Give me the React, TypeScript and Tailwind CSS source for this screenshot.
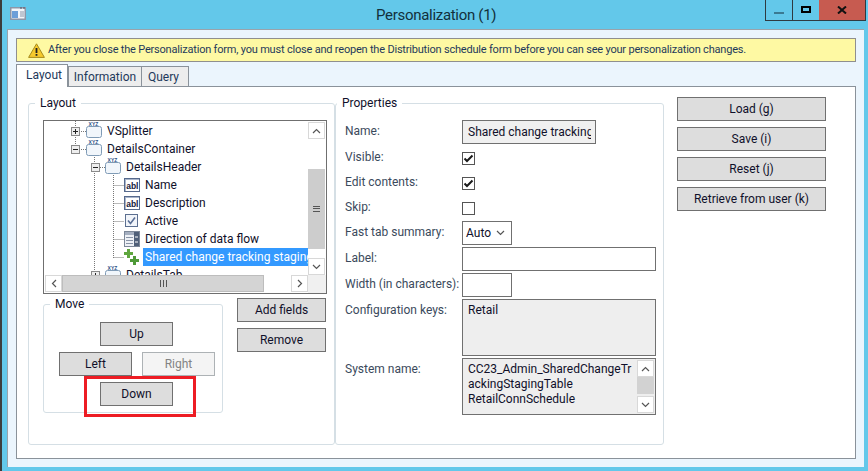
import type { ReactNode } from 'react';

const font = "font-['Roboto',sans-serif]";

function Btn({ children, className = '' }: { children: ReactNode; className?: string }) {
  return (
    <div className={`flex h-[24px] items-center justify-center border border-[#707070] bg-[#dddddd] text-[12px] text-[#10102a] ${className}`}>
      {children}
    </div>
  );
}

function Group({ title, className = '', legendClass = 'left-[6px]', children }: { title: string; className?: string; legendClass?: string; children: ReactNode }) {
  return (
    <div className={`relative rounded-[3px] border border-[#d5dfe5] ${className}`}>
      <span className={`absolute top-[-9px] bg-white px-[5px] text-[12px] leading-[16px] text-[#10102a] ${legendClass}`}>{title}</span>
      {children}
    </div>
  );
}

function XyzIcon() {
  return (
    <svg width="16" height="17" viewBox="0 0 16 17" className="mb-[1px] block shrink-0">
      <path d="M.5 6.5 Q.5 4.5 2.5 4.5 H13.5 Q15.5 4.5 15.5 6.5 V13.5 Q15.5 15.5 13.5 15.5 H2.5 Q.5 15.5 .5 13.5 Z" fill="#f1f6fb" stroke="#7f9bb6" />
      <text x="2.6" y="3.9" fontSize="5" fontWeight="700" fontFamily="Liberation Sans" fill="#2c4f86">XYZ</text>
    </svg>
  );
}

function AblIcon() {
  return (
    <svg width="16" height="14" viewBox="0 0 16 14" className="shrink-0">
      <rect x=".5" y=".5" width="15" height="13" fill="#aab6cc" stroke="#56698c" />
      <rect x="2" y="2" width="13" height="11" fill="#fff" />
      <text x="2.2" y="10.6" fontSize="8.5" fontWeight="700" fontFamily="Liberation Sans" fill="#14203a">abl</text>
    </svg>
  );
}

function CheckIcon() {
  return (
    <svg width="16" height="14" viewBox="0 0 16 14" className="shrink-0">
      <rect x="1.5" y=".5" width="12" height="12" fill="#f2f5fa" stroke="#5c6f90" />
      <path d="M4 6.5 L6.5 9.5 L11 3.5" fill="none" stroke="#5a6f96" strokeWidth="1.6" />
    </svg>
  );
}

function ComboIcon() {
  return (
    <svg width="16" height="16" viewBox="0 0 16 16" className="shrink-0">
      <rect x=".5" y=".5" width="15" height="15" fill="#eef1f6" stroke="#7c8798" />
      <rect x="1" y="1" width="14" height="3" fill="#a5afc0" />
      <path d="M2 6.5h7M2 9.5h7M2 12.5h7" stroke="#8893a6" />
      <rect x="10" y="1" width="5" height="14" fill="#4f5f78" />
      <path d="M11 6h3M11 11h3" stroke="#fff" />
    </svg>
  );
}

function PlusIcon() {
  return (
    <svg width="15" height="16" viewBox="0 0 15 16" className="shrink-0">
      <path d="M3 0h3v3h3v3H6v3H3V6H0V3h3z" fill="#5fa63e" />
      <path d="M9 7h3v3h3v3h-3v3H9v-3H6v-3h3z" fill="#4f9a38" />
    </svg>
  );
}

function Expander({ open }: { open?: boolean }) {
  return (
    <span className="relative h-[9px] w-[9px] shrink-0 border border-[#8a8a8a] bg-[#eeeeee]">
      <span className="absolute left-[1px] top-[3px] h-px w-[5px] bg-[#222]" />
      {!open && <span className="absolute left-[3px] top-[1px] h-[5px] w-px bg-[#222]" />}
    </span>
  );
}

function ArrowUp() {
  return <svg width="9" height="6" viewBox="0 0 9 6"><path d="M1 5 L4.5 1.5 L8 5" fill="none" stroke="#555" strokeWidth="1.2" /></svg>;
}
function ArrowDown() {
  return <svg width="9" height="6" viewBox="0 0 9 6"><path d="M1 1 L4.5 4.5 L8 1" fill="none" stroke="#555" strokeWidth="1.2" /></svg>;
}
function ArrowLeft() {
  return <svg width="6" height="9" viewBox="0 0 6 9"><path d="M5 1 L1.5 4.5 L5 8" fill="none" stroke="#555" strokeWidth="1.2" /></svg>;
}
function ArrowRight() {
  return <svg width="6" height="9" viewBox="0 0 6 9"><path d="M1 1 L4.5 4.5 L1 8" fill="none" stroke="#555" strokeWidth="1.2" /></svg>;
}

function ScrollBtn({ children }: { children: ReactNode }) {
  return <div className="flex h-[17px] w-[17px] shrink-0 items-center justify-center border border-[#d8d8d8] bg-white">{children}</div>;
}

function Tree() {
  return (
    <div className="flex h-[174px] w-[284px] flex-col border border-[#6f6f6f] bg-white text-[12px] text-[#10102a]">
      <div className="relative flex h-[155px] overflow-hidden pr-[1px]">
        <div className="relative min-w-0 flex-1 pt-[1px]">
          <svg className="absolute left-0 top-0" width="120" height="155" viewBox="0 0 120 155">
            <path d="M31.5 0V7M31.5 16V24M35 10.5H42M35 28.5H42M50.5 34V155M54 46.5H61M69.5 52V137M69.5 64.5H80M69.5 82.5H80M69.5 100.5H80M69.5 118.5H80M69.5 136.5H80M50.5 154.5H56" fill="none" stroke="#777" strokeDasharray="1 1" />
          </svg>
          <div className="relative flex h-[18px] items-center pl-[27px]"><Expander /><span className="ml-[6px]"><XyzIcon /></span><span className="ml-[5px]">VSplitter</span></div>
          <div className="relative flex h-[18px] items-center pl-[27px]"><Expander open /><span className="ml-[6px]"><XyzIcon /></span><span className="ml-[5px]">DetailsContainer</span></div>
          <div className="relative flex h-[18px] items-center pl-[47px]"><Expander open /><span className="ml-[5px]"><XyzIcon /></span><span className="ml-[5px]">DetailsHeader</span></div>
          <div className="relative flex h-[18px] items-center pl-[80px]"><AblIcon /><span className="ml-[5px]">Name</span></div>
          <div className="relative flex h-[18px] items-center pl-[80px]"><AblIcon /><span className="ml-[5px]">Description</span></div>
          <div className="relative flex h-[18px] items-center pl-[80px]"><CheckIcon /><span className="ml-[5px]">Active</span></div>
          <div className="relative flex h-[18px] items-center pl-[80px]"><ComboIcon /><span className="ml-[5px]">Direction of data flow</span></div>
          <div className="relative flex h-[18px] items-center pl-[80px]"><PlusIcon /><span className="ml-[4px] flex h-[18px] min-w-0 flex-1 items-center overflow-hidden whitespace-nowrap bg-[#3399ff] pl-[2px] text-white">Shared change tracking staging</span></div>
          <div className="relative flex h-[18px] items-center pl-[47px]"><Expander /><span className="ml-[5px]"><XyzIcon /></span><span className="ml-[5px]">DetailsTab</span></div>
        </div>
        <div className="flex w-[17px] shrink-0 flex-col bg-white pt-[1px]">
          <ScrollBtn><ArrowUp /></ScrollBtn>
          <div className="mt-[30px] flex h-[80px] items-center justify-center bg-[#cdcdcd]">
            <span className="h-[6px] w-[7px] border-y border-[#555] after:mt-[1px] after:block after:h-px after:bg-[#555]" />
          </div>
          <div className="mt-auto"><ScrollBtn><ArrowDown /></ScrollBtn></div>
        </div>
      </div>
      <div className="flex h-[18px] bg-[#f0f0f0]">
        <div className="flex min-w-0 flex-1 bg-white pl-[1px]">
          <ScrollBtn><ArrowLeft /></ScrollBtn>
          <div className="flex h-[17px] w-[202px] items-center justify-center border border-[#bdbdbd] bg-[#d4d4d4]">
            <span className="h-[7px] w-[7px] border-x border-[#555] after:mx-auto after:block after:h-[7px] after:w-px after:bg-[#555]" />
          </div>
          <div className="ml-auto"><ScrollBtn><ArrowRight /></ScrollBtn></div>
        </div>
        <div className="w-[18px] shrink-0" />
      </div>
    </div>
  );
}

function Field({ className = '', children }: { className?: string; children?: ReactNode }) {
  return <div className={`border border-[#707070] ${className}`}>{children}</div>;
}

function Check({ checked }: { checked?: boolean }) {
  return (
    <div className="flex h-[13px] w-[13px] items-center justify-center border border-[#555] bg-white">
      {checked && (
        <svg width="11" height="9" viewBox="0 0 11 9">
          <path d="M1.5 4.5 L4 7 L9.5 1.5" fill="none" stroke="#1a1a1a" strokeWidth="2" />
        </svg>
      )}
    </div>
  );
}

function PropRow({ label, className = '', labelClass = 'mb-[2px]', children }: { label: string; className?: string; labelClass?: string; children: ReactNode }) {
  return (
    <div className={`flex ${className}`}>
      <span className={`w-[117px] shrink-0 whitespace-nowrap text-[12px] leading-[16px] text-[#3b4a5c] ${labelClass}`}>{label}</span>
      {children}
    </div>
  );
}

export default function App() {
  return (
    <div className={`flex h-[471px] w-[868px] flex-col overflow-hidden border-l-2 border-[#3c3c3c] bg-[#63c8ea] ${font}`}>
      {/* title bar */}
      <div className="flex h-[29px] shrink-0">
        <svg width="16" height="13" viewBox="0 0 16 13" className="ml-[8px] mt-[7px] shrink-0">
          <rect x=".75" y=".75" width="14.5" height="11.5" fill="#f3f6fa" stroke="#8d97a8" strokeWidth="1.5" />
          <path d="M10 1h2M13 1h2" stroke="#4c5566" />
          <rect x="2" y="4" width="6" height="7" fill="#6d9fd8" />
          <path d="M10 5h4M10 7h4M10 9h4" stroke="#8a96a8" />
        </svg>
        <span className="ml-[350px] mt-[5px] whitespace-nowrap text-[15px] leading-[20px] tracking-[-0.3px] text-[#12303c]">Personalization (1)</span>
        <div className="ml-auto mr-[2px] flex h-[21px] border border-t-0 border-[#2f3a40]">
          <div className="flex w-[27px] items-center justify-center border-r border-[#2f3a40]">
            <span className="mt-[5px] h-[2px] w-[10px] bg-[#3a7a92]" />
          </div>
          <div className="flex w-[26px] items-center justify-center">
            <span className="mb-[1px] h-[7px] w-[10px] border-2 border-black" />
          </div>
          <div className="flex w-[46px] items-center justify-center bg-[#c75b50]">
            <svg width="10" height="8" viewBox="0 0 10 8">
              <path d="M1 0.5 L9 7.5 M9 0.5 L1 7.5" stroke="#111" strokeWidth="2" />
            </svg>
          </div>
        </div>
      </div>

      {/* form */}
      <div className="ml-[5px] mr-[4px] flex h-[438px] flex-col border-l border-t border-[#9aa3ab] bg-[#ebf5fd] pb-[8px] pl-[8px] pr-[8px] pt-[8px]">
        <div className="flex h-[24px] shrink-0 items-center border border-[#8f8f8f] bg-[#fef9a3] pl-[11px] text-[11px] tracking-[-0.2px] text-[#1e395b]">
          <svg width="17" height="15" viewBox="0 0 17 15" className="shrink-0">
            <path d="M8.5 .8 L16.4 14.4 H.6 Z" fill="#f6c92c" stroke="#a68a1c" strokeLinejoin="round" />
            <rect x="7.6" y="5" width="1.8" height="5" fill="#222" />
            <rect x="7.6" y="11" width="1.8" height="1.8" fill="#222" />
          </svg>
          <span className="ml-[3px] whitespace-nowrap">After you close the Personalization form, you must close and reopen the Distribution schedule form before you can see your personalization changes.</span>
        </div>

        {/* tabs */}
        <div className="relative z-10 -mb-px mt-[2px] flex h-[23px] shrink-0 items-start text-[12px] text-[#1e395b]">
          <div className="flex h-[23px] w-[52px] items-center justify-center border border-b-0 border-[#8a929a] bg-white pb-[2px] pl-[4px]">Layout</div>
          <div className="mt-[2px] flex h-[21px] w-[74px] items-center justify-center border border-[#8a929a] bg-[#ededed]">Information</div>
          <div className="mt-[2px] flex h-[21px] w-[47px] items-center justify-center border border-l-0 border-[#8a929a] bg-[#ededed] pr-[3px]">Query</div>
        </div>

        {/* tab page */}
        <div className="flex min-h-0 flex-1 border border-[#8a929a] bg-white pl-[11px] pt-[10px]">
          <Group title="Layout" className="mt-[6px] h-[342px] w-[307px] pl-[14px] pt-[16px]">
            <Tree />
            <div className="flex">
              <Group title="Move" className="mt-[10px] h-[109px] w-[180px] pl-[15px] pt-[17px]">
                <div className="flex flex-col items-start gap-[6px]">
                  <Btn className="ml-[41px] w-[73px]">Up</Btn>
                  <div className="flex gap-[10px]">
                    <Btn className="w-[73px]">Left</Btn>
                    <Btn className="w-[73px] border-[#adb2b5] bg-[#f4f4f4] text-[#838383]">Right</Btn>
                  </div>
                  <div className="relative ml-[41px]">
                    <Btn className="w-[73px]">Down</Btn>
                    <span className="absolute bottom-[-11px] left-[-16px] right-[-23px] top-[-6px] border-[3px] border-[#ed1c24]" />
                  </div>
                </div>
              </Group>
              <div className="ml-[14px] mt-[4px] flex flex-col gap-[6px]">
                <Btn className="w-[89px]">Add fields</Btn>
                <Btn className="w-[89px]">Remove</Btn>
              </div>
            </div>
          </Group>

          <Group title="Properties" legendClass="left-[1px]" className="mt-[6px] h-[342px] w-[329px] pl-[9px] pt-[16px]">
            <PropRow label="Name:" labelClass="" className="h-[26px] pt-[3px]">
              <Field className="-mt-[3px] flex h-[24px] w-[134px] items-center bg-[#f0f0f0] pl-[5px] text-[12px] text-[#10102a]">
                <span className="w-[123px] overflow-hidden whitespace-nowrap">Shared change tracking</span>
              </Field>
            </PropRow>
            <PropRow label="Visible:" className="h-[24px] items-center"><Check checked /></PropRow>
            <PropRow label="Edit contents:" className="h-[26px] items-center"><Check checked /></PropRow>
            <PropRow label="Skip:" className="h-[24px] items-center"><Check /></PropRow>
            <PropRow label="Fast tab summary:" className="h-[26px] items-center">
              <Field className="flex h-[24px] w-[50px] items-center justify-between pl-[3px] pr-[6px] text-[12px] text-[#10102a]">
                Auto
                <ArrowDown />
              </Field>
            </PropRow>
            <PropRow label="Label:" className="h-[26px] items-center"><Field className="h-[24px] w-[194px]" /></PropRow>
            <PropRow label="Width (in characters):" className="h-[26px] items-center"><Field className="h-[24px] w-[50px]" /></PropRow>
            <PropRow label="Configuration keys:" labelClass="" className="mt-[1px] h-[59px] pt-[3px]">
              <Field className="-mt-[3px] h-[57px] w-[194px] bg-[#eeeeee] pl-[5px] pt-[2px] text-[12px] leading-[16px] text-[#10102a]">Retail</Field>
            </PropRow>
            <PropRow label="System name:" labelClass="" className="pt-[3px]">
              <Field className="-mt-[3px] flex h-[57px] w-[194px] bg-[#eeeeee] pl-[5px] pr-[1px] text-[12px] leading-[15px] text-[#10102a]">
                <div className="min-w-0 flex-1 whitespace-nowrap pt-[3px]">
                  <div>CC23_Admin_SharedChangeTr</div>
                  <div>ackingStagingTable</div>
                  <div>RetailConnSchedule</div>
                </div>
                <div className="flex w-[17px] shrink-0 flex-col pt-[1px]">
                  <ScrollBtn><ArrowUp /></ScrollBtn>
                  <div className="h-[17px] shrink-0 bg-[#d2d2d2]" />
                  <div className="mt-[2px]"><ScrollBtn><ArrowDown /></ScrollBtn></div>
                </div>
              </Field>
            </PropRow>
          </Group>

          <div className="ml-[13px] flex w-[149px] flex-col gap-[6px]">
            <Btn>Load (g)</Btn>
            <Btn>Save (i)</Btn>
            <Btn>Reset (j)</Btn>
            <Btn>Retrieve from user (k)</Btn>
          </div>
        </div>
      </div>
    </div>
  );
}
